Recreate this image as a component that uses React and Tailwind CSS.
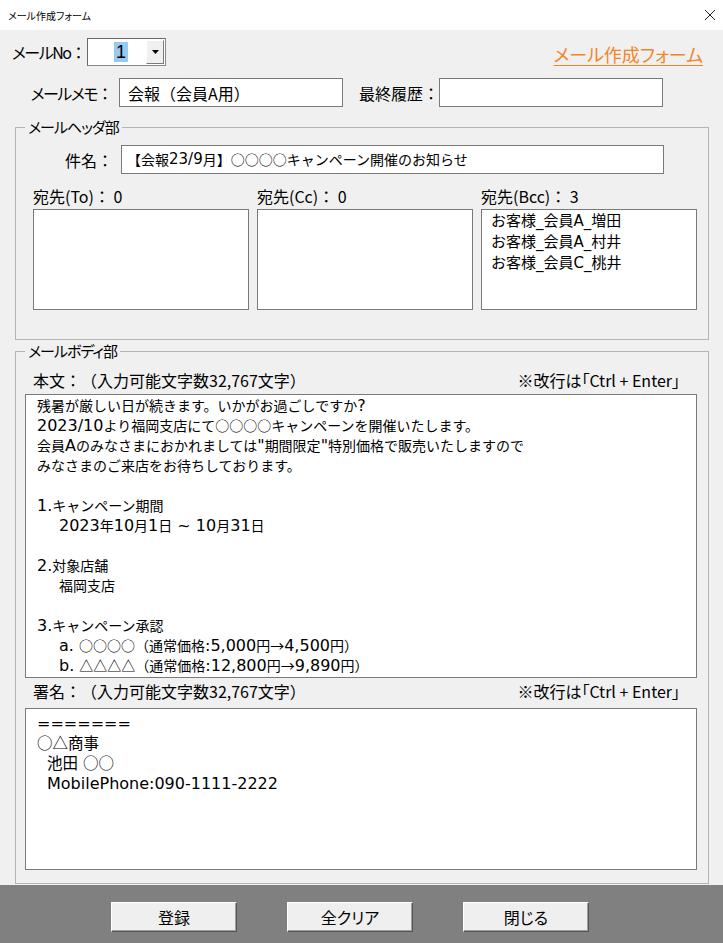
import React from "react";

const bodyLines = [
  { t: "残暑が厳しい日が続きます。いかがお過ごしですか?" },
  { t: "2023/10より福岡支店にて○○○○キャンペーンを開催いたします。" },
  { t: '会員Aのみなさまにおかれましては"期間限定"特別価格で販売いたしますので' },
  { t: "みなさまのご来店をお待ちしております。" },
  { t: "" },
  { t: "1.キャンペーン期間" },
  { t: "2023年10月1日 ~ 10月31日", i: true },
  { t: "" },
  { t: "2.対象店舗" },
  { t: "福岡支店", i: true },
  { t: "" },
  { t: "3.キャンペーン承認" },
  { t: "a. ○○○○（通常価格:5,000円→4,500円）", i: true },
  { t: "b. △△△△（通常価格:12,800円→9,890円）", i: true },
];

const sigLines = [
  { t: "=======" },
  { t: "○△商事" },
  { t: "池田 ○○", i: true },
  { t: "MobilePhone:090-1111-2222", i: true },
];

const ASCII = /^[\x20-\x7e]+$/;
function Mixed({ text, latin }) {
  return text
    .split(/([\x20-\x7e]+)/)
    .filter((s) => s !== "")
    .map((s, i) =>
      ASCII.test(s) ? (
        <span key={i} className={latin}>
          {s}
        </span>
      ) : (
        <span key={i}>{s}</span>
      )
    );
}

function Btn({ children }) {
  return (
    <button className="w-[126px] h-[30px] bg-[#efefef] border border-t-white border-l-white border-b-[#555] border-r-[#555] shadow-[inset_-1px_-1px_0_#a0a0a0] text-[16px] text-black font-['Noto_Sans_CJK_JP',sans-serif] [font-feature-settings:'palt'] flex items-center justify-center">
      {children}
    </button>
  );
}

const cjk = "font-['Noto_Sans_CJK_JP',sans-serif]";
const latin16 = "font-['DejaVu_Sans',sans-serif] text-[16px]";
const latin15 = "font-['DejaVu_Sans',sans-serif] text-[15px]";

export default function App() {
  return (
    <div className={`w-[723px] h-[943px] flex flex-col ${cjk} [text-spacing-trim:space-all] text-black overflow-hidden`}>
      {/* title bar */}
      <div className="h-[30px] bg-white flex items-center justify-between pl-[8px] pr-[6px] shrink-0">
        <span className="text-[10px] [font-feature-settings:'palt']">メール作成フォーム</span>
        <svg width="12" height="12" viewBox="0 0 12 12" className="mr-[1px]">
          <path d="M1 1 L11 11 M11 1 L1 11" stroke="#222" strokeWidth="1" fill="none" />
        </svg>
      </div>

      {/* form */}
      <div className="flex-1 bg-[#f0f0f0] flex flex-col">
        {/* row 1 */}
        <div className="mt-[8px] h-[28px] flex items-center pl-[12px] pr-[20px]">
          <div className="w-[75px] text-[16px] leading-[20px] whitespace-nowrap">
            <span className="[font-feature-settings:'palt'] tracking-[-1.5px]">メールNo</span>：
          </div>
          <div className="w-[79px] h-[28px] bg-white border border-[#8a8a8a] border-t-[#6a6a6a] border-l-[#6a6a6a] flex items-stretch">
            <div className="flex-1 flex items-center justify-center pl-[8px]">
              <span className="bg-[#99c9ef] text-[18px] leading-[20px] px-[2px] font-['Liberation_Sans',sans-serif]">1</span>
            </div>
            <div className="w-[18px] my-[1px] mr-[1px] bg-[#f0f0f0] border border-t-white border-l-white border-b-[#7a7a7a] border-r-[#7a7a7a] flex items-center justify-center">
              <svg width="7" height="4" viewBox="0 0 7 4"><path d="M0 0 H7 L3.5 4 Z" fill="#000" /></svg>
            </div>
          </div>
          <div className="ml-auto text-[18px] text-[#f0862a] underline underline-offset-[3px] decoration-1 [font-feature-settings:'palt'] leading-[22px] mt-[4px]">
            メール作成フォーム
          </div>
        </div>

        {/* row 2 */}
        <div className="mt-[12px] h-[29px] flex items-center pl-[12px]">
          <div className="w-[107px] text-right pr-[6px] text-[16px] whitespace-nowrap">
            <span className="[font-feature-settings:'palt'] tracking-[-1.5px]">メールメモ</span>：
          </div>
          <div className="w-[224px] h-[29px] bg-white border border-[#7a7a7a] flex items-center pl-[8px] text-[16px] whitespace-nowrap">
            会報（会員A用）
          </div>
          <div className="ml-[16px] w-[80px] text-[16px] whitespace-nowrap">最終履歴：</div>
          <div className="w-[224px] h-[29px] bg-white border border-[#7a7a7a]" />
        </div>

        {/* header group */}
        <fieldset className="mt-[10px] ml-[15px] w-[694px] border border-[#b4b4b4]">
          <legend className="ml-[9px] px-[3px] text-[15px] leading-[20px] [font-feature-settings:'palt'] tracking-[-1px]">メールヘッダ部</legend>
          <div className="pl-[17px] pr-[11px] pt-[8px] pb-[29px]">
            <div className="flex items-center h-[29px]">
              <div className="w-[88px] text-right pr-[8px] text-[16px]">件名：</div>
              <div className="w-[543px] h-[29px] bg-white border border-[#7a7a7a] flex items-center pl-[5px] text-[14px] whitespace-nowrap">
                <Mixed text="【会報23/9月】○○○○キャンペーン開催のお知らせ" latin={latin15} />
              </div>
            </div>
            <div className="mt-[12px] grid grid-cols-[216px_216px_216px] gap-x-[8px]">
              {[
                ["宛先(To)：", "0", []],
                ["宛先(Cc)：", "0", []],
                ["宛先(Bcc)：", "3", ["お客様_会員A_増田", "お客様_会員A_村井", "お客様_会員C_桃井"]],
              ].map(([label, n, items]) => (
                <div key={label} className="flex flex-col">
                  <div className="h-[20px] leading-[20px] text-[16px] whitespace-nowrap">
                    {label} {n}
                  </div>
                  <div className="mt-[3px] h-[101px] bg-white border border-[#7a7a7a] pl-[9px] text-[15px] leading-[20px]">
                    {items.map((it) => (
                      <div key={it} className="whitespace-nowrap">
                        <Mixed text={it} latin={latin15} />
                      </div>
                    ))}
                  </div>
                </div>
              ))}
            </div>
          </div>
        </fieldset>

        {/* body group */}
        <fieldset className="mt-[1px] ml-[15px] w-[694px] border border-[#b4b4b4]">
          <legend className="ml-[9px] px-[3px] text-[15px] leading-[20px] [font-feature-settings:'palt'] tracking-[-1px]">メールボディ部</legend>
          <div className="pl-[9px] pr-[11px] pt-[9px] pb-[13px]">
            <div className="h-[20px] flex items-center justify-between pl-[8px] pr-[17px] text-[16px] leading-[20px] whitespace-nowrap">
              <span>本文：（入力可能文字数32,767文字）</span>
              <span className="[font-feature-settings:'palt']">※改行は「Ctrl + Enter」</span>
            </div>
            <div className="mt-[4px] w-[672px] h-[284px] bg-white border border-[#7a7a7a] overflow-hidden pl-[11px] text-[14px] leading-[20px]">
              {bodyLines.map((l, i) => (
                <div key={i} className={`h-[20px] whitespace-nowrap ${l.i ? "pl-[22px]" : ""}`}>
                  <Mixed text={l.t} latin={latin16} />
                </div>
              ))}
            </div>
            <div className="mt-[3px] h-[20px] flex items-center justify-between pl-[8px] pr-[17px] text-[16px] leading-[20px] whitespace-nowrap">
              <span>署名：（入力可能文字数32,767文字）</span>
              <span className="[font-feature-settings:'palt']">※改行は「Ctrl + Enter」</span>
            </div>
            <div className="mt-[7px] w-[672px] h-[162px] bg-white border border-[#7a7a7a] pl-[11px] pt-[3px] text-[15.5px] leading-[20px]">
              {sigLines.map((l, i) => (
                <div key={i} className={`h-[20px] whitespace-nowrap ${l.i ? "pl-[10px]" : ""}`}>
                  <Mixed text={l.t} latin={latin16} />
                </div>
              ))}
            </div>
          </div>
        </fieldset>
        <div className="flex-1" />
      </div>

      {/* bottom bar */}
      <div className="h-[58px] bg-[#808080] shrink-0 flex items-start pt-[17px] pl-[111px] gap-[50px]">
        <Btn>登録</Btn>
        <Btn>全クリア</Btn>
        <Btn>閉じる</Btn>
      </div>
    </div>
  );
}
